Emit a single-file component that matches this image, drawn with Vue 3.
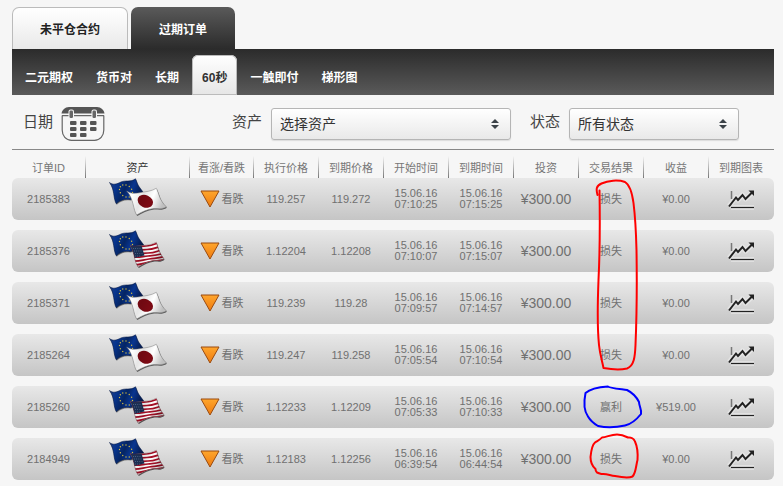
<script setup>
import { ref } from 'vue'

const tabs = [
  { label: '未平仓合约', active: false },
  { label: '过期订单', active: true },
]
const kinds = ['二元期权', '货币对', '长期', '60秒', '一触即付', '梯形图']
const activeKind = ref('60秒')
const asset = ref('选择资产')
const status = ref('所有状态')

const columns = ['订单ID', '资产', '看涨/看跌', '执行价格', '到期价格', '开始时间', '到期时间', '投资', '交易结果', '收益', '到期图表']

const orders = [
  { id: '2185383', flag: 'jp', open: '119.257', close: '119.272', start: '07:10:25', end: '07:15:25', result: '损失', profit: '¥0.00' },
  { id: '2185376', flag: 'us', open: '1.12204', close: '1.12208', start: '07:10:07', end: '07:15:07', result: '损失', profit: '¥0.00' },
  { id: '2185371', flag: 'jp', open: '119.239', close: '119.28', start: '07:09:57', end: '07:14:57', result: '损失', profit: '¥0.00' },
  { id: '2185264', flag: 'jp', open: '119.247', close: '119.258', start: '07:05:54', end: '07:10:54', result: '损失', profit: '¥0.00' },
  { id: '2185260', flag: 'us', open: '1.12233', close: '1.12209', start: '07:05:33', end: '07:10:33', result: '赢利', profit: '¥519.00' },
  { id: '2184949', flag: 'us', open: '1.12183', close: '1.12256', start: '06:39:54', end: '06:44:54', result: '损失', profit: '¥0.00' },
]

// Outlines of the waving cloths, shared by the fill, shade and shadow layers
const euCloth = 'M1.500 4.500C5 7.500 9 6 13 4S23 4.500 27.500 0.800C29 4 29.500 7 32 10L38 18L22 21.500C17 20.500 12 22 8.300 25.800C5 20 7 12 1.500 4.500Z'
const jpCloth = 'M18.700 13C23 16 28 15.500 33 14.500S43 13.500 48.300 10.300C51 15 51 22 58.300 28.700C54 32 49 30 44.300 30.700S33 34 28.700 37C25 32 26 21 18.700 13Z'
const usCloth = 'M22 15.300C27 17 32 15.500 37 15.300S44 14.500 48.300 12.300C50 17 51 23 56 28.700C52 32 49 30 45 30.700S35 33.500 30.300 37C26 32 27 23 22 15.300Z'

const stars = Array.from({ length: 12 }, (_, i) => {
  const a = (i * Math.PI) / 6
  return { x: 18 + 6.5 * Math.cos(a), y: 13 + 6 * Math.sin(a) + 1.5 * Math.cos(a) }
})
</script>

<template>
  <main class="page">
    <svg class="defs" width="0" height="0" aria-hidden="true">
      <defs>
        <linearGradient id="euShade" x1="0" y1="0" x2="1" y2="0.3">
          <stop offset="0" stop-color="#27407c" />
          <stop offset="0.25" stop-color="#07358f" />
          <stop offset="0.5" stop-color="#052563" />
          <stop offset="0.68" stop-color="#083590" />
          <stop offset="1" stop-color="#05163f" />
        </linearGradient>
        <linearGradient id="clothShade" x1="0" y1="0" x2="1" y2="0.3">
          <stop offset="0" stop-color="#000" stop-opacity="0.08" />
          <stop offset="0.2" stop-color="#000" stop-opacity="0" />
          <stop offset="0.45" stop-color="#000" stop-opacity="0.1" />
          <stop offset="0.7" stop-color="#000" stop-opacity="0" />
          <stop offset="1" stop-color="#000" stop-opacity="0.25" />
        </linearGradient>
        <linearGradient id="orange" x1="0" y1="0" x2="0" y2="1">
          <stop offset="0" stop-color="#ffa62c" />
          <stop offset="1" stop-color="#ee7a10" />
        </linearGradient>
        <clipPath id="usClip"><path :d="usCloth" /></clipPath>
      </defs>
    </svg>

    <nav class="tabs">
      <button v-for="t in tabs" :key="t.label" type="button" class="tab" :class="{ active: t.active }">{{ t.label }}</button>
    </nav>

    <nav class="kinds">
      <button
        v-for="k in kinds"
        :key="k"
        type="button"
        class="kind"
        :class="{ active: k === activeKind }"
        @click="activeKind = k"
      >{{ k }}</button>
    </nav>

    <form class="filters" @submit.prevent>
      <div class="field date">
        <span class="label" id="date-label">日期</span>
        <button type="button" class="calendar" aria-labelledby="date-label">
          <svg width="44" height="36" viewBox="0 0 44 36">
            <path d="M0.500 7.500C1 4 4 1 8 1H36C40 1 43 4 43.500 7.500Z" fill="#555" />
            <path d="M1.200 9.500V24C1.200 30 5 34.300 10.500 34.300H33.500C39 34.300 42.800 30 42.800 24V9.500" fill="none" stroke="#666" stroke-width="1.200" />
            <path d="M1 9.700H43" stroke="#666" stroke-width="1.200" />
            <rect x="7.500" y="3.500" width="5.500" height="9.500" rx="2" fill="#f5f5f5" />
            <rect x="30.500" y="3.500" width="5.500" height="9.500" rx="2" fill="#f5f5f5" />
            <rect x="8.500" y="4.500" width="3.500" height="7.500" rx="1.200" fill="#666" />
            <rect x="31.500" y="4.500" width="3.500" height="7.500" rx="1.200" fill="#666" />
            <g fill="#555">
              <rect x="9" y="15" width="6.500" height="4" rx="1" />
              <rect x="19" y="15" width="6.500" height="4" rx="1" />
              <rect x="29" y="15" width="6.500" height="4" rx="1" />
              <rect x="9" y="21" width="6.500" height="4" rx="1" />
              <rect x="19" y="21" width="6.500" height="4" rx="1" />
              <rect x="29" y="21" width="6.500" height="4" rx="1" />
              <rect x="9" y="27" width="6.500" height="4" rx="1" />
              <rect x="19" y="27" width="6.500" height="4" rx="1" />
            </g>
          </svg>
        </button>
      </div>
      <div class="field">
        <label class="label" for="asset">资产</label>
        <span class="picker">
          <select id="asset" v-model="asset"><option>选择资产</option></select>
          <svg class="updown" width="8" height="10" viewBox="0 0 8 10" aria-hidden="true"><path d="M0 4L4 0L8 4ZM0 6H8L4 10Z" fill="#3b4248" /></svg>
        </span>
      </div>
      <div class="field state">
        <label class="label" for="status">状态</label>
        <span class="picker">
          <select id="status" v-model="status"><option>所有状态</option></select>
          <svg class="updown" width="8" height="10" viewBox="0 0 8 10" aria-hidden="true"><path d="M0 4L4 0L8 4ZM0 6H8L4 10Z" fill="#3b4248" /></svg>
        </span>
      </div>
    </form>

    <div class="orders">
      <table>
        <thead>
          <tr>
            <th v-for="c in columns" :key="c" scope="col" :class="{ sorted: c === '资产' }">{{ c }}</th>
          </tr>
        </thead>
        <tbody>
          <tr v-for="o in orders" :key="o.id">
            <td>{{ o.id }}</td>
            <td>
              <svg class="flags" width="60" height="42" viewBox="0 0 60 42" aria-hidden="true">
                <path :d="euCloth" transform="translate(0.500 1)" fill="#000" opacity="0.450" />
                <path :d="euCloth" fill="url(#euShade)" stroke="#0a1c48" stroke-width="0.600" />
                <circle v-for="(s, i) in stars" :key="i" :cx="s.x" :cy="s.y" r="0.700" fill="#d8c040" />
                <g v-if="o.flag === 'jp'">
                  <path :d="jpCloth" transform="translate(0.600 1)" fill="#000" opacity="0.550" />
                  <path :d="jpCloth" fill="#fff" />
                  <ellipse cx="37.300" cy="23.300" rx="8" ry="6.200" transform="rotate(24 37.300 23.300)" fill="#7d0a14" />
                  <path :d="jpCloth" fill="url(#clothShade)" stroke="#777" stroke-width="0.500" />
                </g>
                <g v-else>
                  <path :d="usCloth" transform="translate(0.600 1)" fill="#000" opacity="0.600" />
                  <g clip-path="url(#usClip)">
                    <path d="M20 10H60V40H20Z" fill="#fff" />
                    <g fill="none" stroke="#a80f26" stroke-width="1.700">
                      <path d="M22 16.500C29 18 34 16 38 16S45 15 50 13" />
                      <path d="M23 20C30 21 34 19.500 39 19.500S46 18.500 52 16.500" />
                      <path d="M24 23.500C31 24.500 34 23 40 23S47 22 53 20" />
                      <path d="M24 27C31 28 34 26.500 40 26S48 25.500 55 23.500" />
                      <path d="M25 31C31 31.500 34 30 41 29S49 28.500 57 26.500" />
                      <path d="M26 35C32 35 35 33.500 41 32S51 31 58 29.500" />
                    </g>
                    <path d="M20 14L33.500 15C34.500 19 35 21 36.500 25.500C33 26 30 27 25 28.500Z" fill="#1c3157" />
                    <path d="M25 18.500H33M26 21H34M27 23.500H35M27 26H32" stroke="#8291ad" stroke-width="0.600" stroke-dasharray="0.800 1.400" />
                  </g>
                  <path :d="usCloth" fill="url(#clothShade)" stroke="#5a2028" stroke-width="0.400" />
                </g>
              </svg>
            </td>
            <td class="direction">
              <svg width="20" height="18" viewBox="0 0 20 18" aria-hidden="true">
                <path d="M1 1H19L10 17Z" fill="url(#orange)" stroke="#9a4b10" stroke-width="1" stroke-linejoin="round" />
              </svg>
              <span>看跌</span>
            </td>
            <td>{{ o.open }}</td>
            <td>{{ o.close }}</td>
            <td class="time">15.06.16<br />{{ o.start }}</td>
            <td class="time">15.06.16<br />{{ o.end }}</td>
            <td class="amount">¥300.00</td>
            <td>{{ o.result }}</td>
            <td>{{ o.profit }}</td>
            <td>
              <button type="button" class="chart" aria-label="到期图表">
                <svg width="29" height="24" viewBox="0 0 29 24">
                  <g fill="none" stroke="#fff" stroke-width="5" stroke-linejoin="round" opacity="0.350">
                    <path d="M4 20.500H27M2 19L9 10.500L11 13L15.500 8L18.500 12L26 5" />
                  </g>
                  <path d="M4.500 4V12" stroke="#777" stroke-width="1.500" />
                  <path d="M4 20.500H27" stroke="#222" stroke-width="1.200" />
                  <path d="M2 19.500L9 10.500L11 13L15.500 8L18.500 12L25 5.500" fill="none" stroke="#222" stroke-width="2" />
                  <path d="M21.500 3.500H27V9Z" fill="#222" />
                </svg>
              </button>
            </td>
          </tr>
        </tbody>
      </table>

      <svg class="marks" viewBox="12 150 762 330" preserveAspectRatio="none" aria-hidden="true">
        <g fill="none" stroke-width="2" stroke-linejoin="round" stroke-linecap="round">
          <path stroke="#f00" d="M599.500 190.500C600 220 600 250 598.500 280C597.500 305 597 325 599 345C600 355 602 360 603.500 368C612 369.500 620 370 627 368.500C634 366 635 357 635.500 345C637 310 637 280 636.500 250C636 230 635 215 633.500 203C632 192 630 185 625 182C618 179.500 608 180.500 601.500 183.500C596 186 596 189 597.500 195" />
          <path stroke="#00f" d="M585.500 393C590 389 600 387 608 386.500C609 388 620 389 627 390C633 393 637 398 639 402C639 406 642 410 641 414C637 419 632 424 625 425.500C616 427.500 605 427.500 598 426C593 423 590 420 588 416.500C584 411 583.500 403 585.500 393" />
          <path stroke="#f00" d="M595 442.500C597 441 600 440 602 437.500C607 437 611 434.500 617 434.500C621 434.500 625 436 628 437.500C631 437 634 439 635 441.500C637 446 638 453 637.500 460C636 465 636 473 632.500 476.500C628 478.500 620 477 615 476C610 475.500 607 473.500 602 474C598 473 595.500 473 595.500 469C592 466 590.500 461 590.500 457C591 452 592 445 595 442.500" />
        </g>
      </svg>
    </div>
  </main>
</template>

<style>
body {
  background: #f6f6f6;
}
</style>

<style scoped>
.page {
  padding: 7px 9px 0 12px;
  font-family: "Liberation Sans", "Noto Sans CJK SC", sans-serif;
  color: #444;
}

.defs {
  position: absolute;
}

button,
select {
  font-family: inherit;
  margin: 0;
}

.tabs {
  display: flex;
  gap: 3px;
}

.tab {
  height: 42px;
  padding: 0 27px;
  border: 1px solid #bbb;
  border-bottom: 0;
  border-radius: 7px 7px 0 0;
  background: linear-gradient(#fff, #e9e9e9);
  color: #222;
  font-size: 12px;
  font-weight: bold;
}

.tab.active {
  border: 0;
  padding: 0 28px;
  background: linear-gradient(#5a5a5a, #2b2b2b);
  color: #fff;
}

.kinds {
  display: flex;
  align-items: flex-end;
  gap: 3px;
  height: 46px;
  padding-left: 3px;
  background: linear-gradient(#2b2b2b, #5a5a5a);
}

.kind {
  height: 40px;
  padding: 3px 10px 0;
  border: 0;
  border-radius: 6px 6px 0 0;
  background: none;
  color: #fff;
  font-size: 12px;
  font-weight: bold;
}

.kind.active {
  background: linear-gradient(#fff, #e6e6e6);
  box-shadow: inset 0 0 0 1px #bbb;
  color: #333;
}

.filters {
  display: grid;
  grid-template-columns: 209fr 279fr 228fr;
  height: 54px;
  padding: 0 35px 0 11px;
  border-bottom: 1px solid #888;
}

.field {
  display: flex;
  align-items: center;
  gap: 9px;
  padding-top: 3px;
}

.field.date {
  gap: 8px;
}

.field.state {
  padding-left: 19px;
}

.label {
  padding-bottom: 3px;
  font-size: 15px;
  line-height: 20px;
  white-space: nowrap;
}

.calendar,
.chart {
  display: block;
  padding: 0;
  border: 0;
  background: none;
}

.calendar svg,
.chart svg,
.flags {
  display: block;
}

.picker {
  display: grid;
  flex: 1;
  align-items: center;
}

.picker > * {
  grid-area: 1 / 1;
}

.picker select {
  appearance: none;
  width: 100%;
  height: 32px;
  padding: 0 24px 0 8px;
  border: 1px solid #b5b5b5;
  border-radius: 3px;
  background: linear-gradient(#fff, #e9e9e9);
  box-shadow: 0 1px 1px #ddd;
  color: #333;
  font-size: 14px;
}

.updown {
  justify-self: end;
  margin-right: 12px;
  pointer-events: none;
}

.orders {
  position: relative;
}

table,
thead {
  display: block;
}

tbody {
  display: grid;
  gap: 10px;
}

tr {
  display: grid;
  grid-template-columns: 74fr 104fr 64fr repeat(8, 65fr);
}

th {
  height: 20px;
  padding: 8px 1px 0 0;
  background: linear-gradient(transparent, #777) right bottom / 1px 22px no-repeat;
  color: #777;
  font-size: 11px;
  font-weight: normal;
  line-height: 20px;
  white-space: nowrap;
}

th:last-child {
  background: none;
}

th.sorted {
  color: #333;
}

tbody tr {
  height: 42px;
  border-radius: 6px;
  background: linear-gradient(#e8e8e8, #c5c5c5);
}

td {
  display: flex;
  align-items: center;
  justify-content: center;
  padding: 0 1px 0 0;
  color: #707070;
  font-size: 11px;
  line-height: 11px;
  white-space: nowrap;
}

.direction {
  gap: 2px;
}

.time {
  display: block;
  padding-top: 10px;
  text-align: center;
}

.amount {
  font-size: 14px;
}

.marks {
  position: absolute;
  inset: 0;
  width: 100%;
  height: 100%;
  pointer-events: none;
}
</style>
